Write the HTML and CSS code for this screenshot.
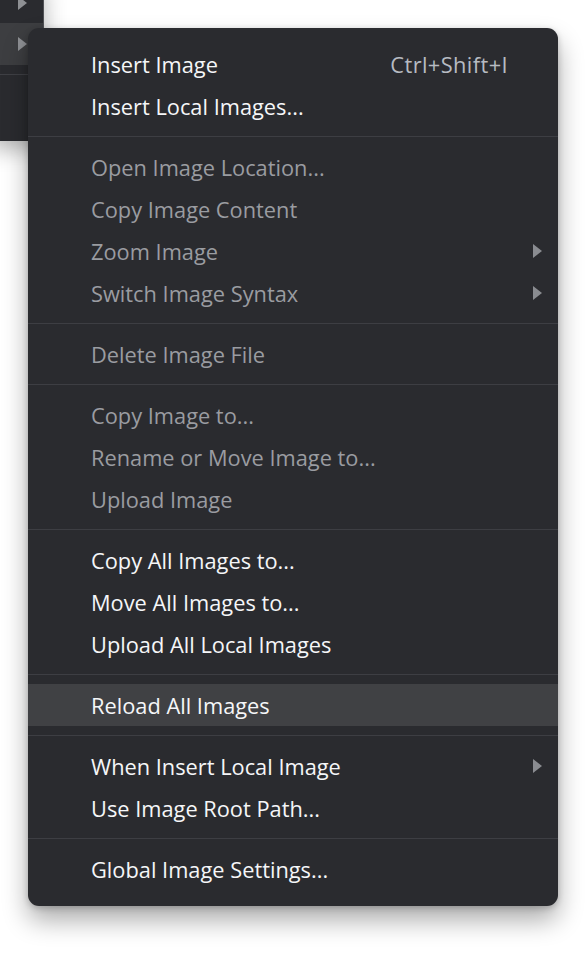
FILE: index.html
```html
<!DOCTYPE html>
<html>
<head>
<meta charset="utf-8">
<link rel="stylesheet" href="styles.css">
</head>
<body>
<div class="stage">
  <div class="parent-menu">
    <div class="p-row p-top"><span class="arrow"></span></div>
    <div class="p-row p-hover"><span class="arrow"></span></div>
    <div class="p-sep"></div>
  </div>
  <div class="menu">
    <div class="item"><span class="label">Insert Image</span><span class="shortcut">Ctrl+Shift+I</span></div>
    <div class="item"><span class="label">Insert Local Images...</span></div>
    <div class="sep"></div>
    <div class="item disabled"><span class="label">Open Image Location...</span></div>
    <div class="item disabled"><span class="label">Copy Image Content</span></div>
    <div class="item disabled"><span class="label">Zoom Image</span><span class="sub"></span></div>
    <div class="item disabled"><span class="label">Switch Image Syntax</span><span class="sub"></span></div>
    <div class="sep"></div>
    <div class="item disabled"><span class="label">Delete Image File</span></div>
    <div class="sep"></div>
    <div class="item disabled"><span class="label">Copy Image to...</span></div>
    <div class="item disabled"><span class="label">Rename or Move Image to...</span></div>
    <div class="item disabled"><span class="label">Upload Image</span></div>
    <div class="sep"></div>
    <div class="item"><span class="label">Copy All Images to...</span></div>
    <div class="item"><span class="label">Move All Images to...</span></div>
    <div class="item"><span class="label">Upload All Local Images</span></div>
    <div class="sep"></div>
    <div class="item active"><span class="label">Reload All Images</span></div>
    <div class="sep"></div>
    <div class="item"><span class="label">When Insert Local Image</span><span class="sub"></span></div>
    <div class="item"><span class="label">Use Image Root Path...</span></div>
    <div class="sep"></div>
    <div class="item"><span class="label">Global Image Settings...</span></div>
  </div>
</div>
</body>
</html>
```

FILE: styles.css
```css
html, body {
  margin: 0;
  padding: 0;
  background: #ffffff;
}
body {
  width: 585px;
  height: 955px;
  overflow: hidden;
  font-family: "Open Sans", "Noto Sans", "DejaVu Sans", sans-serif;
}
.stage {
  position: relative;
  width: 585px;
  height: 955px;
}
.parent-menu {
  position: absolute;
  left: -10px;
  top: -20px;
  width: 54px;
  height: 161px;
  background: #2a2b2f;
  border-right: 1px solid #505155;
  box-shadow: 0 8px 22px rgba(0, 0, 0, 0.3);
  box-sizing: border-box;
}
.p-row {
  position: relative;
  height: 42px;
}
.p-top {
  height: 43px;
}
.p-hover {
  background: #3d3e41;
}
.p-row .arrow {
  position: absolute;
  left: 28px;
  top: 50%;
  margin-top: -7px;
  width: 0;
  height: 0;
  border-left: 9px solid #8e9094;
  border-top: 7px solid transparent;
  border-bottom: 7px solid transparent;
}
.p-top .arrow {
  margin-top: -4px;
  top: 20px;
}
.p-sep {
  height: 1px;
  margin-top: 9px;
  background: #3f4045;
}
.menu {
  position: absolute;
  left: 28px;
  top: 28px;
  width: 530px;
  box-sizing: border-box;
  padding: 15px 0 16px;
  background: #2a2b2f;
  border-radius: 11px;
  box-shadow: 0 14px 26px rgba(0, 0, 0, 0.33), 0 2px 6px rgba(0, 0, 0, 0.2);
  color: #f5f6f8;
  font-size: 21.8px;
}
.item {
  display: flex;
  align-items: center;
  height: 42px;
  padding: 0 16px 0 63px;
  position: relative;
}
.item .label {
  flex: 1;
  white-space: nowrap;
}
.item .shortcut {
  color: #b7bbc2;
  margin-right: 34px;
  letter-spacing: 0.4px;
}
.item.disabled {
  color: #9a9ca1;
}
.item.active {
  background: #404144;
}
.sub {
  width: 0;
  height: 0;
  border-left: 9px solid #8a8c91;
  border-top: 7px solid transparent;
  border-bottom: 7px solid transparent;
}
.sep {
  height: 1px;
  margin: 9px 0 9px;
  background: #3d3e43;
}
```
